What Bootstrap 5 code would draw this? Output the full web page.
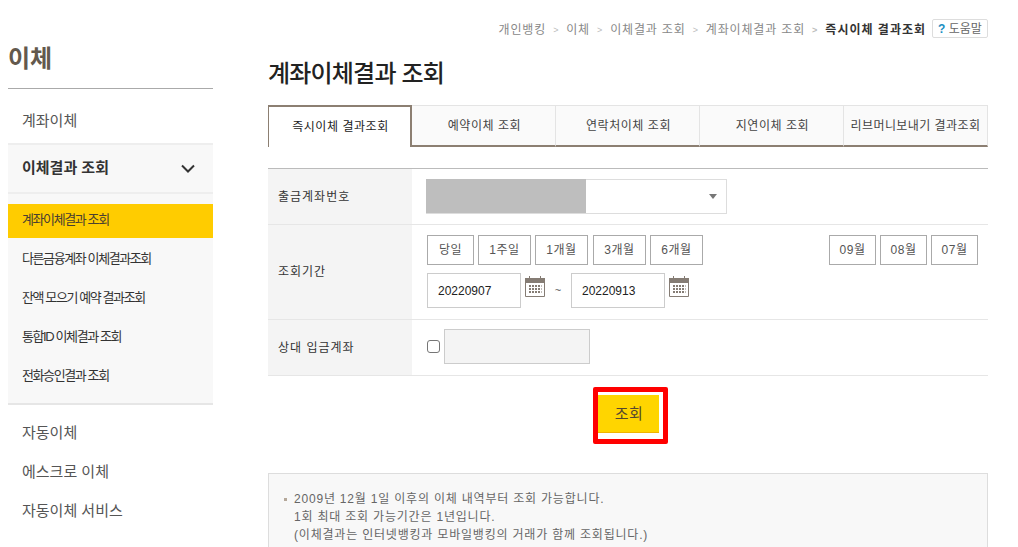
<!DOCTYPE html>
<html lang="ko">
  <head>
    <meta charset="UTF-8" />
    <title>계좌이체결과 조회</title>
    <link href="https://cdn.jsdelivr.net/npm/bootstrap@5.3.0/dist/css/bootstrap.min.css" rel="stylesheet" />
    <style>
      html, body { height: 547px; overflow: hidden; }
      body { font-family: "Liberation Sans", "Noto Sans CJK KR", sans-serif; font-size: 12px; color: #333; background: #fff; }
      .page-wrap { width: 1018px; }
      /* sidebar */
      .side { width: 205px; margin-left: 8px; flex: none; }
      .side-title { height: 89px; margin: 0; padding-top: 42px; font-size: 24px; line-height: 34px; font-weight: 700; color: #63594d; border-bottom: 1px solid #aaa; }
      .side-link { display: block; padding: 0 14px; height: 39px; line-height: 39px; font-size: 15px; color: #555; text-decoration: none; }
      .side-first { margin-top: 11px; height: 43px; line-height: 41px; }
      .side-open { height: 51px; padding: 0 14px; background: #f8f8f8; border-top: 2px solid #eee; border-bottom: 2px solid #eee; font-size: 15px; font-weight: 700; color: #333; }
      .side-sub { background: #f8f8f8; padding: 10px 0 8px; border-bottom: 2px solid #e6e6e6; margin-bottom: 8px; }
      .side-sub a { display: block; height: 39px; line-height: 39px; padding: 0 14px; font-size: 13px; letter-spacing: -1.4px; color: #333; text-decoration: none; }
      .side-sub a.on { height: 34px; line-height: 32px; margin-bottom: 1px; background: #ffcc00; color: #4a4030; }
      /* main */
      .main-area { width: 720px; margin-left: 55px; flex: none; }
      .crumb-row { padding-top: 19px; box-sizing: content-box; height: 19px; }
      .crumb-row .breadcrumb { --bs-breadcrumb-divider: ">"; --bs-breadcrumb-item-padding-x: 7px; --bs-breadcrumb-margin-bottom: 0; --bs-breadcrumb-divider-color: #bbb; padding-top: 2px; font-size: 12px; line-height: 19px; letter-spacing: .85px; }
      .crumb-row .breadcrumb-item { color: #888; }
      .crumb-row .breadcrumb-item.active { color: #333; font-weight: 700; letter-spacing: 1px; }
      .crumb-row .breadcrumb-item + .breadcrumb-item::before { font-size: 9px; }
      .help-btn { --bs-btn-padding-x: 0; --bs-btn-padding-y: 0; width: 56px; height: 19px; margin-left: 6px; font-size: 12px; line-height: 16px; color: #666; background: #fff; border: 1px solid #ddd; border-radius: 2px; }
      .help-btn b { color: #1a8ec2; }
      .page-title { margin: 0; height: 47px; padding-top: 20px; box-sizing: content-box; font-size: 24px; line-height: 32px; font-weight: 500; letter-spacing: -.8px; color: #222; }
      .tab-bar { --bs-nav-tabs-border-width: 0; border-bottom: 0; height: 42px; flex-wrap: nowrap; }
      .tab-bar .nav-link { width: 144px; height: 42px; padding: 0 0 0 2px; margin: 0; line-height: 41px; text-align: center; font-size: 12px; letter-spacing: .55px; color: #444; background: #fafafa; border: 1px solid #e4e4e4; border-left: 0; border-bottom: 2px solid #8c7f72; border-radius: 0; }
      .tab-bar .nav-link.active { color: #222; background: #fff; border: 2px solid #8c7f72; border-bottom: 0; border-top-width: 2px; border-left-width: 1px; }
      .tab-bar .nav-item:last-child .nav-link { padding-left: 0; letter-spacing: .45px; white-space: nowrap; }
      .search-table { margin: 21px 0 0; width: 720px; border-top: 1px solid #bbb; table-layout: fixed; --bs-table-border-color: #e6e6e6; }
      .search-table th { width: 144px; padding: 0 10px; background: #f4f4f4; font-size: 12px; font-weight: 400; letter-spacing: 1px; color: #333; vertical-align: middle; }
      .search-table td { padding: 0 10px 0 15px; vertical-align: top; }
      .row-a { height: 56px; }
      .row-b { height: 95px; }
      .row-c { height: 56px; }
      .acct-select { width: 301px; height: 35px; margin: 10px 0 0 -1px; border: 1px solid #ddd; background: #fff; }
      .acct-hide { width: 160px; height: 34px; margin: -1px 0 0 -1px; align-self: flex-start; background: #bebebe; }
      .acct-arrow { width: 0; height: 0; border-left: 4px solid transparent; border-right: 4px solid transparent; border-top: 5px solid #777; margin-right: 9px; }
      .term-row { margin-top: 10px; height: 30px; }
      .term-btn { --bs-btn-padding-x: 0; --bs-btn-padding-y: 0; height: 30px; font-size: 12px; letter-spacing: .5px; color: #555; background: #fff; border: 1px solid #aaa; border-radius: 0; }
      .w-47 { width: 47px; }
      .w-53 { width: 53px; }
      .gap-plus { margin-left: 1px; }
      .date-row { margin-top: 8px; }
      .date-box { width: 94px; height: 35px; padding: 0 10px; font-size: 12px; color: #222; border: 1px solid #ccc; border-radius: 0; }
      .date-tilde { width: 26px; text-align: center; font-size: 11px; color: #555; padding-top: 9px; }
      .cal-ico { margin: 3px 0 0 4px; width: 20px; height: 21px; flex: none; }
      .other-line { margin-top: 9px; }
      .chk-box { width: 13px; height: 13px; margin: 0; border: 1px solid #767676; border-radius: 2px; }
      .other-acct, .other-acct:disabled { width: 146px; height: 35px; border: 1px solid #ccc; border-radius: 0; background: #f4f4f4; }
      .mark-box { border: 5px solid #f00; border-radius: 2px; padding: 3px 4px 6px 0; margin-top: 11px; background: #fff; line-height: 0; }
      .go-btn { --bs-btn-padding-x: 0; --bs-btn-padding-y: 0; width: 61px; height: 38px; padding-left: 2px; font-size: 15px; letter-spacing: .5px; line-height: 36px; color: #55472f; background: #ffd500; border: 0; border-bottom: 1px solid #f0b400; border-radius: 0; }
      .note-box { margin-top: 29px; height: 90px; padding: 16px 15px; background: #f8f8f8; border: 1px solid #ddd; border-bottom: 0; font-size: 12px; line-height: 18px; letter-spacing: .8px; color: #666; }
      .note-dot { width: 3px; height: 3px; margin: 8px 7px 0 0; background: #b5a89a; flex: none; }
    </style>
  </head>
  <body>
    <div class="page-wrap d-flex">
      <aside class="side">
        <h2 class="side-title">이체</h2>
        <a href="#" class="side-link side-first">계좌이체</a>
        <div class="side-open d-flex align-items-center justify-content-between">
          <span>이체결과 조회</span>
          <svg width="14" height="9" viewBox="0 0 14 9" class="me-1"><path d="M1 1.5l6 6 6-6" fill="none" stroke="#333" stroke-width="2"/></svg>
        </div>
        <div class="side-sub">
          <a href="#" class="on">계좌이체결과 조회</a>
          <a href="#">다른금융계좌 이체결과조회</a>
          <a href="#">잔액 모으기 예약 결과조회</a>
          <a href="#">통합ID 이체결과 조회</a>
          <a href="#">전화승인결과 조회</a>
        </div>
        <a href="#" class="side-link">자동이체</a>
        <a href="#" class="side-link">에스크로 이체</a>
        <a href="#" class="side-link">자동이체 서비스</a>
      </aside>

      <main class="main-area">
        <div class="crumb-row d-flex justify-content-end">
          <ol class="breadcrumb">
            <li class="breadcrumb-item">개인뱅킹</li>
            <li class="breadcrumb-item">이체</li>
            <li class="breadcrumb-item">이체결과 조회</li>
            <li class="breadcrumb-item">계좌이체결과 조회</li>
            <li class="breadcrumb-item active">즉시이체 결과조회</li>
          </ol>
          <button type="button" class="btn help-btn"><b>?</b> 도움말</button>
        </div>
        <h1 class="page-title">계좌이체결과 조회</h1>

        <ul class="nav nav-tabs tab-bar">
          <li class="nav-item"><a class="nav-link active" href="#">즉시이체 결과조회</a></li>
          <li class="nav-item"><a class="nav-link" href="#">예약이체 조회</a></li>
          <li class="nav-item"><a class="nav-link" href="#">연락처이체 조회</a></li>
          <li class="nav-item"><a class="nav-link" href="#">지연이체 조회</a></li>
          <li class="nav-item"><a class="nav-link" href="#">리브머니보내기 결과조회</a></li>
        </ul>

        <table class="table search-table mb-0">
          <tbody>
            <tr class="row-a">
              <th scope="row">출금계좌번호</th>
              <td>
                <div class="acct-select d-flex align-items-center justify-content-between">
                  <div class="acct-hide"></div>
                  <div class="acct-arrow"></div>
                </div>
              </td>
            </tr>
            <tr class="row-b">
              <th scope="row">조회기간</th>
              <td>
                <div class="term-row d-flex justify-content-between">
                  <div class="d-flex gap-1">
                    <button type="button" class="btn term-btn w-47">당일</button>
                    <button type="button" class="btn term-btn w-53">1주일</button>
                    <button type="button" class="btn term-btn w-53">1개월</button>
                    <button type="button" class="btn term-btn w-53 gap-plus">3개월</button>
                    <button type="button" class="btn term-btn w-53">6개월</button>
                  </div>
                  <div class="d-flex gap-1">
                    <button type="button" class="btn term-btn w-47">09월</button>
                    <button type="button" class="btn term-btn w-47">08월</button>
                    <button type="button" class="btn term-btn w-47">07월</button>
                  </div>
                </div>
                <div class="date-row d-flex">
                  <input type="text" class="form-control date-box" value="20220907" />
                  <svg class="cal-ico" viewBox="0 0 20 21"><path fill="#857c74" d="M0 2h4V0h1v2h10V0h1v2h4v5H0z"/><path fill="none" stroke="#857c74" d="M.5 6v14.5h19V6"/><path stroke="#857c74" stroke-width="2" stroke-dasharray="2 1" d="M4 10h12.5M4 13h12.5M4 16h12.5"/></svg>
                  <div class="date-tilde">~</div>
                  <input type="text" class="form-control date-box" value="20220913" />
                  <svg class="cal-ico" viewBox="0 0 20 21"><path fill="#857c74" d="M0 2h4V0h1v2h10V0h1v2h4v5H0z"/><path fill="none" stroke="#857c74" d="M.5 6v14.5h19V6"/><path stroke="#857c74" stroke-width="2" stroke-dasharray="2 1" d="M4 10h12.5M4 13h12.5M4 16h12.5"/></svg>
                </div>
              </td>
            </tr>
            <tr class="row-c">
              <th scope="row">상대 입금계좌</th>
              <td>
                <div class="other-line d-flex align-items-center gap-1">
                  <input type="checkbox" class="form-check-input chk-box" />
                  <input type="text" class="form-control other-acct" disabled />
                </div>
              </td>
            </tr>
          </tbody>
        </table>

        <div class="d-flex justify-content-center">
          <div class="mark-box ms-1"><button type="button" class="btn go-btn">조회</button></div>
        </div>

        <div class="note-box d-flex">
          <span class="note-dot"></span>
          <p class="mb-0">2009년 12월 1일 이후의 이체 내역부터 조회 가능합니다.<br />1회 최대 조회 가능기간은 1년입니다.<br />(이체결과는 인터넷뱅킹과 모바일뱅킹의 거래가 함께 조회됩니다.)</p>
        </div>
      </main>
    </div>
    <script src="https://cdn.jsdelivr.net/npm/bootstrap@5.3.0/dist/js/bootstrap.bundle.min.js"></script>
  </body>
</html>
